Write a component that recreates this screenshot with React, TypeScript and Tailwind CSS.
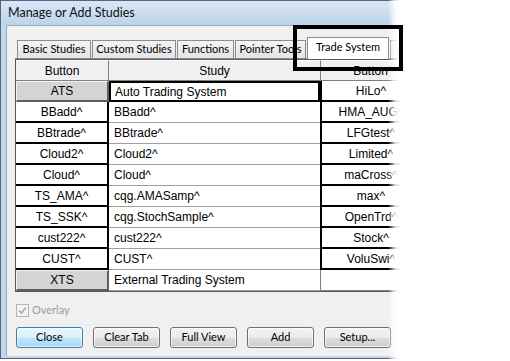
import React from 'react';

type StudyRow = {
  button: string;
  study: string;
  other: string;
  system?: boolean;
};

const ROWS: StudyRow[] = [
  { button: 'ATS', study: 'Auto Trading System', other: 'HiLo^', system: true },
  { button: 'BBadd^', study: 'BBadd^', other: 'HMA_AUG^' },
  { button: 'BBtrade^', study: 'BBtrade^', other: 'LFGtest^' },
  { button: 'Cloud2^', study: 'Cloud2^', other: 'Limited^' },
  { button: 'Cloud^', study: 'Cloud^', other: 'maCross^' },
  { button: 'TS_AMA^', study: 'cqg.AMASamp^', other: 'max^' },
  { button: 'TS_SSK^', study: 'cqg.StochSample^', other: 'OpenTrd^' },
  { button: 'cust222^', study: 'cust222^', other: 'Stock^' },
  { button: 'CUST^', study: 'CUST^', other: 'VoluSwi^' },
  { button: 'XTS', study: 'External Trading System', other: '', system: true },
];

const TABS = [
  { label: 'Basic Studies', width: 'w-[74px]' },
  { label: 'Custom Studies', width: 'w-[84px]' },
  { label: 'Functions', width: 'w-[57px]' },
  { label: 'Pointer Tools', width: 'w-[71px]' },
];

const ACTIONS = ['Close', 'Clear Tab', 'Full View', 'Add', 'Setup...'];

const GridRow: React.FC<{ row: StudyRow; selected: boolean }> = ({ row, selected }) => {
  const buttonCell = row.system
    ? 'bg-[#d4d4d4] border-t border-l border-t-[#f4f4f4] border-l-[#f4f4f4] border-r-2 border-b-2 border-r-[#5e5e5e] border-b-[#5e5e5e]'
    : 'bg-white border-r-2 border-b-2 border-black';

  const studyCell = selected
    ? 'border-2 border-black pl-[4px]'
    : 'border-b border-[#a0a0a0] pl-[5px]';

  const otherCell = row.other
    ? 'border-l-2 border-b-2 border-black'
    : 'border-l border-b border-[#808080]';

  return (
    <div className="flex h-[21px]">
      <div className={`w-[93px] shrink-0 flex items-center justify-center ${buttonCell}`}>
        {row.button}
      </div>
      <div className={`w-[211px] shrink-0 flex items-center bg-white ${studyCell}`}>
        {row.study}
      </div>
      <div className={`w-[100px] shrink-0 flex items-center justify-center bg-white whitespace-nowrap overflow-hidden ${otherCell}`}>
        {row.other}
      </div>
    </div>
  );
};

export default function App() {
  return (
    <div className="relative w-[510px] h-[361px] bg-white overflow-hidden font-['Lato','Noto_Sans',sans-serif] text-[11px] text-black">
      <div className="w-[440px] h-[359px] flex flex-col overflow-hidden border-t border-l border-b border-[#54667c] bg-[#c3d7ed]">
        <div className="h-[24px] shrink-0 flex items-center pl-[7px] text-[12.5px] text-[#101010] bg-linear-to-b from-[#dae6f4] to-[#bdd3ea]">
          Manage or Add Studies
        </div>

        <div className="flex-1 flex pl-[5px] pb-[2px]">
          <div className="flex-1 flex flex-col bg-[#f0f0f0] border-l border-t border-[#98abc2] pl-[8px] pt-[11px]">
            {/* tab strip */}
            <div className="flex items-end gap-px h-[22px] pl-[2px] border-b border-[#898c95]">
              {TABS.map((tab) => (
                <div
                  key={tab.label}
                  className={`${tab.width} h-[18px] shrink-0 flex items-center justify-center border border-b-0 border-[#898c95] bg-linear-to-b from-[#f3f3f3] to-[#e4e4e4]`}
                >
                  {tab.label}
                </div>
              ))}
              <div className="w-[82px] h-[22px] -mb-px shrink-0 flex items-center justify-center pb-[2px] border border-b-0 border-[#898c95] bg-white">
                Trade System
              </div>
              <div className="w-[60px] h-[18px] shrink-0 flex items-center pl-[6px] border border-b-0 border-[#898c95] bg-linear-to-b from-[#f3f3f3] to-[#e4e4e4]">
                Alerts
              </div>
            </div>

            {/* studies grid */}
            <div className="w-[420px] border-t border-l border-b border-[#5a5a5a] font-['Liberation_Sans',Arial,sans-serif] text-[12px]">
              <div className="flex h-[21px] bg-[#f0f0f0]">
                <div className="w-[93px] shrink-0 flex items-center justify-center border-t border-t-white border-r border-b border-r-[#808080] border-b-[#808080]">
                  Button
                </div>
                <div className="w-[212px] shrink-0 flex items-center justify-center border-t border-t-white border-r border-b border-r-[#808080] border-b-[#808080]">
                  Study
                </div>
                <div className="w-[99px] shrink-0 flex items-center justify-center border-t border-t-white border-b border-b-[#808080]">
                  Button
                </div>
              </div>
              {ROWS.map((row, i) => (
                <GridRow key={row.button} row={row} selected={i === 0} />
              ))}
            </div>

            {/* overlay */}
            <div className="flex items-center gap-[3px] mt-[12px] h-[13px] pl-px text-[#9c9c9c]">
              <div className="w-[13px] h-[13px] border border-[#b4b4b4] bg-[#f4f4f4] flex items-center justify-center">
                <svg width="9" height="9" viewBox="0 0 9 9">
                  <path d="M1 4.5 L3.5 7 L8 1.5" fill="none" stroke="#a8a8a8" strokeWidth="1.6" />
                </svg>
              </div>
              <span>Overlay</span>
            </div>

            {/* actions */}
            <div className="flex gap-[10px] mt-[10px] pl-px">
              {ACTIONS.map((label) => (
                <div
                  key={label}
                  className={
                    label === 'Close'
                      ? 'w-[67px] h-[21px] flex items-center justify-center rounded-[3px] border border-[#3c7fb1] shadow-[inset_0_0_0_1px_rgba(255,255,255,0.6)] bg-[linear-gradient(to_bottom,#eaf6fd_0%,#d9f0fc_50%,#bee6fd_50%,#a7d9f5_100%)]'
                      : 'w-[67px] h-[21px] flex items-center justify-center rounded-[3px] border border-[#707070] shadow-[inset_0_0_0_1px_rgba(255,255,255,0.7)] bg-[linear-gradient(to_bottom,#f2f2f2_0%,#ebebeb_50%,#dddddd_50%,#cfcfcf_100%)]'
                  }
                >
                  {label}
                </div>
              ))}
            </div>
          </div>
        </div>
      </div>

      {/* screenshot fades out to white on the right */}
      <div className="absolute left-[388px] top-0 w-[122px] h-full bg-[linear-gradient(to_right,rgba(255,255,255,0)_0px,rgba(255,255,255,0.85)_7px,#ffffff_13px)]" />

      {/* highlight box */}
      <div className="absolute left-[293px] top-[25px] w-[110px] h-[46px] border-4 border-black" />
    </div>
  );
}
